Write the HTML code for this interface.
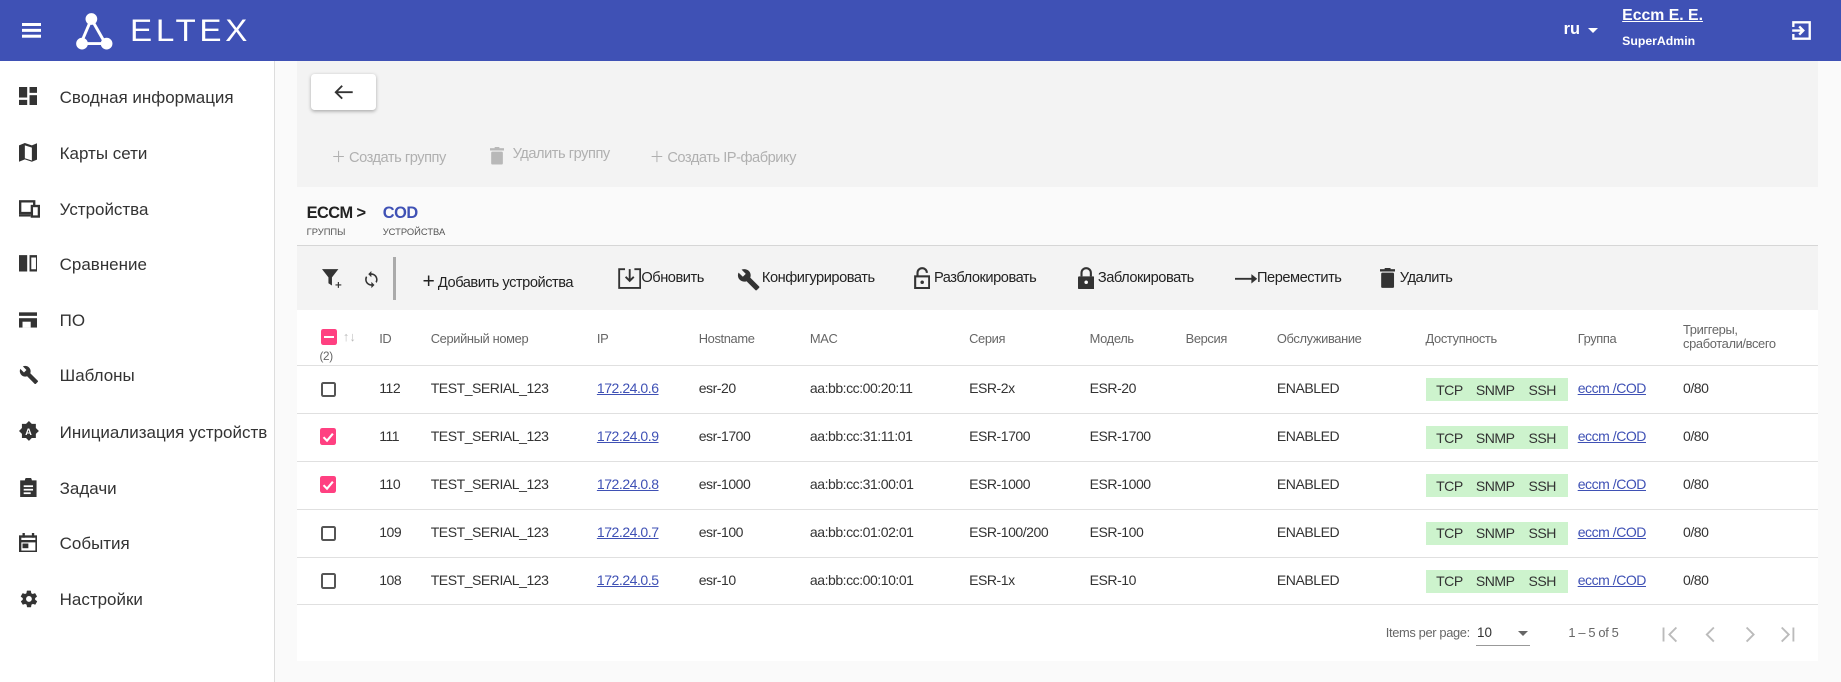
<!DOCTYPE html>
<html><head><meta charset="utf-8">
<style>
html{zoom:1.1704}
*{box-sizing:border-box;margin:0;padding:0}
body{width:1573px;height:583px;overflow:hidden;background:#fafafa;font-family:"Liberation Sans",sans-serif;color:#333;position:relative}
.a{position:absolute;white-space:nowrap}
.hdr{left:0;top:0;width:1573px;height:52px;background:#3f51b5;color:#fff}
.side{left:0;top:52px;width:235px;height:531px;background:#fff;border-right:1px solid #ddd}
.nav{left:16px;font-size:14.5px;color:#333}
.nav svg{position:absolute;left:0;top:-1px}
.nav span{position:absolute;left:35px;top:0}
.t{font-size:12px;color:#333;letter-spacing:-0.4px}
.th{font-size:11px;color:#666;letter-spacing:-0.3px}
.tool{font-size:12.5px;color:#222;top:231px;letter-spacing:-0.4px}
.row{left:254px;width:1299px;height:1px;background:#e0e0e0}
.cb{width:13px;height:13px;border:2px solid #555;border-radius:2px}
.cbon{width:14px;height:14px;background:#ff4081;border-radius:2px}
.acc{background:#cdf3cd;width:122px;height:20px;font-size:12px;color:#333;letter-spacing:-0.4px}
.acc span{position:absolute;top:3px}
.lnk{color:#3f51b5;text-decoration:underline;font-size:12px;letter-spacing:-0.4px}
</style></head><body>
<div class="a hdr">
  <div class="a" style="left:19px;top:20px;width:16px;height:2px;background:#fff;box-shadow:0 5px 0 #fff,0 10px 0 #fff"></div>
  <svg class="a" style="left:64px;top:10px" width="34" height="34" viewBox="0 0 34 34"><g stroke="#fff" stroke-width="2.5"><line x1="14" y1="6" x2="5" y2="27"/><line x1="14" y1="6" x2="26" y2="27"/><line x1="5" y1="27" x2="26" y2="27"/></g><circle cx="14" cy="6" r="5" fill="#fff"/><circle cx="6" cy="27" r="5" fill="#fff"/><circle cx="27" cy="27" r="5" fill="#fff"/></svg>
  <div class="a" style="left:111px;top:10px;font-size:27px;letter-spacing:3px;color:#fff;transform:scaleX(1.05);transform-origin:left">ELTEX</div>
  <div class="a" style="left:1336px;top:17px;font-size:14px;font-weight:bold">ru</div>
  <div class="a" style="left:1357px;top:24px;border-left:5px solid transparent;border-right:5px solid transparent;border-top:5px solid #fff"></div>
  <div class="a" style="left:1386px;top:6px;font-size:13.5px;text-decoration:underline;font-weight:bold">Eccm E. E.</div>
  <div class="a" style="left:1386px;top:29px;font-size:10.5px;font-weight:bold">SuperAdmin</div>
  <svg class="a" style="left:1530px;top:17px" width="18" height="18" viewBox="0 0 18 18" fill="none" stroke="#fff" stroke-width="2"><path d="M2 6V2h14v14H2v-4"/><path d="M1 9h9M7 5.5L10.5 9 7 12.5"/></svg>
</div>
<div class="a side"></div>
<div class="a nav" style="top:75px"><svg width="16" height="16" viewBox="0 0 16 16" fill="#333"><rect x="0" y="0" width="7" height="9"/><rect x="9" y="0" width="7" height="5"/><rect x="9" y="7" width="7" height="9"/><rect x="0" y="11" width="7" height="5"/></svg><span>Сводная информация</span></div>
<div class="a nav" style="top:123px"><svg width="16" height="16" viewBox="0 0 16 16" fill="#333"><path d="M0 2l5-2 6 2 5-2v14l-5 2-6-2-5 2z M5 2v11l6 2V4z" fill-rule="evenodd"/></svg><span>Карты сети</span></div>
<div class="a nav" style="top:171px"><svg width="18" height="16" viewBox="0 0 18 16" fill="none" stroke="#333" stroke-width="2"><rect x="1" y="2" width="12" height="10"/><rect x="11" y="6" width="6" height="9" fill="#fff"/><line x1="0" y1="14" x2="10" y2="14"/></svg><span>Устройства</span></div>
<div class="a nav" style="top:218px"><svg width="16" height="16" viewBox="0 0 16 16" fill="#333"><path d="M0 1h7v14H0z M9 1h7v14H9z M10.5 3v10h4V3z" fill-rule="evenodd"/></svg><span>Сравнение</span></div>
<div class="a nav" style="top:266px"><svg width="16" height="16" viewBox="0 0 16 16" fill="#333"><rect x="0" y="2" width="16" height="3"/><rect x="0" y="7" width="16" height="8"/><rect x="3" y="10" width="7" height="5" fill="#fff"/></svg><span>ПО</span></div>
<div class="a nav" style="top:313px"><svg width="17" height="17" viewBox="0 0 24 24" fill="#333"><path d="M22.7 19l-9.1-9.1c.9-2.3.4-5-1.5-6.9-2-2-5-2.4-7.4-1.3L9 6 6 9 1.6 4.7C.4 7.1.9 10.1 2.9 12.1c1.9 1.9 4.6 2.4 6.9 1.5l9.1 9.1c.4.4 1 .4 1.4 0l2.3-2.3c.5-.4.5-1.1.1-1.4z"/></svg><span>Шаблоны</span></div>
<div class="a nav" style="top:361px"><svg width="17" height="17" viewBox="0 0 17 17"><path d="M8.5 0l2.4 2.5h3.5v3.5L17 8.5l-2.6 2.5v3.5h-3.5L8.5 17 6 14.5H2.5V11L0 8.5 2.5 6V2.5H6z" fill="#333"/><text x="5.2" y="12" font-size="8" font-weight="bold" fill="#fff" font-family="Liberation Sans">A</text></svg><span>Инициализация устройств</span></div>
<div class="a nav" style="top:409px"><svg width="16" height="17" viewBox="0 0 16 17" fill="#333"><path d="M1 2h4a3 3 0 016 0h4v15H1z"/><g stroke="#fff" stroke-width="1.5"><line x1="4" y1="7" x2="12" y2="7"/><line x1="4" y1="10" x2="12" y2="10"/><line x1="4" y1="13" x2="10" y2="13"/></g></svg><span>Задачи</span></div>
<div class="a nav" style="top:456px"><svg width="16" height="17" viewBox="0 0 16 17" fill="none" stroke="#333" stroke-width="2"><rect x="1" y="3" width="14" height="13"/><line x1="1" y1="7" x2="15" y2="7"/><line x1="4" y1="0" x2="4" y2="4"/><line x1="12" y1="0" x2="12" y2="4"/><rect x="4" y="10" width="3" height="2" fill="#333"/></svg><span>События</span></div>
<div class="a nav" style="top:504px"><svg width="17" height="17" viewBox="0 0 24 24" fill="#333"><path d="M19.4 13c0-.3.1-.6.1-1s0-.7-.1-1l2.1-1.6c.2-.2.2-.4.1-.6l-2-3.5c-.1-.2-.4-.3-.6-.2l-2.5 1c-.5-.4-1.1-.7-1.7-1l-.4-2.6c0-.3-.2-.5-.5-.5h-4c-.3 0-.5.2-.5.4l-.4 2.7c-.6.2-1.100.6-1.700 1l-2.500-1c-.2-.1-.5 0-.6.2l-2 3.5c-.1.2-.1.5.1.6L4.6 11c0 .3-.1.6-.1 1s0 .7.1 1l-2.1 1.6c-.2.2-.2.4-.1.6l2 3.5c.1.2.4.3.6.2l2.5-1c.5.4 1.1.7 1.7 1l.4 2.7c0 .2.2.4.5.4h4c.3 0 .5-.2.5-.4l.4-2.7c.6-.3 1.2-.6 1.7-1l2.5 1c.2.1.5 0 .6-.2l2-3.5c.1-.2.1-.5-.1-.6zM12 15.5a3.5 3.5 0 110-7 3.5 3.5 0 010 7z"/></svg><span>Настройки</span></div>

<div class="a" style="left:254px;top:52px;width:1299px;height:108px;background:#f3f3f3"></div>
<div class="a" style="left:266px;top:63px;width:55px;height:31px;background:#fff;border-radius:3px;box-shadow:0 1px 3px rgba(0,0,0,.3)"></div>
<svg class="a" style="left:285px;top:72px" width="17" height="14" viewBox="0 0 17 14" fill="none" stroke="#333" stroke-width="1.6"><path d="M16 7H2M7 1.5L1.5 7 7 12.5"/></svg>
<div class="a" style="left:283px;top:125px;font-size:12.5px;color:#b0b0b0;letter-spacing:-0.4px">＋ Создать группу</div>
<svg class="a" style="left:419px;top:126px" width="12" height="15" viewBox="0 0 12 15" fill="#b8b8b8"><rect x="0" y="1" width="12" height="2"/><rect x="4" y="0" width="4" height="2"/><rect x="1" y="4" width="10" height="11" rx="1"/></svg>
<div class="a" style="left:438px;top:125px;font-size:12.5px;color:#b0b0b0;letter-spacing:-0.4px">Удалить группу</div>
<div class="a" style="left:555px;top:125px;font-size:12.5px;color:#b0b0b0;letter-spacing:-0.4px">＋ Создать IP-фабрику</div>

<div class="a" style="left:262px;top:174px;font-size:14px;color:#222;font-weight:bold;letter-spacing:-0.5px">ECCM &gt;</div>
<div class="a" style="left:327px;top:174px;font-size:14px;color:#3f51b5;font-weight:bold;letter-spacing:-0.4px">COD</div>
<div class="a" style="left:262px;top:194px;font-size:8px;color:#555">ГРУППЫ</div>
<div class="a" style="left:327px;top:194px;font-size:8px;color:#555">УСТРОЙСТВА</div>
<div class="a" style="left:254px;top:209px;width:1299px;height:1px;background:#d6d6d6"></div>

<div class="a" style="left:254px;top:210px;width:1299px;height:55px;background:#f3f3f3"></div>
<svg class="a" style="left:275px;top:229px" width="20" height="18" viewBox="0 0 20 18"><path d="M0 1h14L8.5 8v7L5.5 13V8z" fill="#333"/><path d="M14 12v5M11.5 14.5h5" stroke="#333" stroke-width="1"/></svg>
<svg class="a" style="left:309px;top:230px" width="16" height="18" viewBox="0 0 24 24" fill="#333"><path d="M12 4V1L8 5l4 4V6c3.3 0 6 2.7 6 6 0 1-.3 2-.7 2.8l1.5 1.5c.8-1.2 1.2-2.7 1.2-4.3 0-4.4-3.6-8-8-8zm0 14c-3.3 0-6-2.7-6-6 0-1 .3-2 .7-2.8L5.2 7.7C4.4 8.9 4 10.4 4 12c0 4.4 3.6 8 8 8v3l4-4-4-4v3z"/></svg>
<div class="a" style="left:336px;top:220px;width:2px;height:36px;background:#aaa"></div>
<div class="a tool" style="left:361px;top:230px"><b style="font-weight:400;font-size:18px;position:relative;top:1px">+</b> Добавить устройства</div>
<svg class="a" style="left:528px;top:229px" width="20" height="18" viewBox="0 0 20 18" fill="none" stroke="#333" stroke-width="1.6"><path d="M6 1H1v16h18V1h-5"/><path d="M10 1v10M6.5 7.5L10 11l3.5-3.5"/></svg>
<div class="a tool" style="left:548px">Обновить</div>
<svg class="a" style="left:630px;top:229px" width="20" height="20" viewBox="0 0 24 24" fill="#333"><path d="M22.7 19l-9.1-9.1c.9-2.3.4-5-1.5-6.9-2-2-5-2.4-7.4-1.3L9 6 6 9 1.6 4.7C.4 7.1.9 10.1 2.9 12.1c1.9 1.9 4.6 2.4 6.9 1.5l9.1 9.1c.4.4 1 .4 1.4 0l2.3-2.3c.5-.4.5-1.1.1-1.4z"/></svg>
<div class="a tool" style="left:651px">Конфигурировать</div>
<svg class="a" style="left:781px;top:228px" width="14" height="19" viewBox="0 0 14 19"><path d="M3 8V5a4 4 0 018 0" fill="none" stroke="#333" stroke-width="1.8"/><rect x="1" y="8" width="12" height="10" fill="none" stroke="#333" stroke-width="1.8"/><circle cx="7" cy="13" r="1.5" fill="#333"/></svg>
<div class="a tool" style="left:798px">Разблокировать</div>
<svg class="a" style="left:921px;top:228px" width="14" height="19" viewBox="0 0 14 19"><path d="M3 8V5a4 4 0 018 0v3" fill="none" stroke="#333" stroke-width="1.8"/><rect x="0" y="8" width="14" height="11" rx="1" fill="#333"/><circle cx="7" cy="13" r="1.5" fill="#fff"/></svg>
<div class="a tool" style="left:938px">Заблокировать</div>
<svg class="a" style="left:1055px;top:233px" width="19" height="10" viewBox="0 0 19 10"><path d="M0 5h16" stroke="#333" stroke-width="1.6"/><path d="M14 1l5 4-5 4z" fill="#333"/></svg>
<div class="a tool" style="left:1074px">Переместить</div>
<svg class="a" style="left:1179px;top:229px" width="13" height="17" viewBox="0 0 13 17" fill="#333"><rect x="0" y="1" width="13" height="2"/><rect x="4" y="0" width="5" height="2"/><rect x="1" y="4" width="11" height="13" rx="1"/></svg>
<div class="a tool" style="left:1196px">Удалить</div>

<div class="a" style="left:254px;top:265px;width:1299px;height:300px;background:#fff"></div>
<div class="a cbon" style="left:274px;top:281px"><div class="a" style="left:3px;top:6px;width:8px;height:2px;background:#fff"></div></div>
<div class="a" style="left:293px;top:281px;font-size:11px;color:#bbb">↑↓</div>
<div class="a th" style="left:273px;top:299px;font-size:10px">(2)</div>
<div class="a th" style="left:324px;top:283px">ID</div>
<div class="a th" style="left:368px;top:283px">Серийный номер</div>
<div class="a th" style="left:510px;top:283px">IP</div>
<div class="a th" style="left:597px;top:283px">Hostname</div>
<div class="a th" style="left:692px;top:283px">MAC</div>
<div class="a th" style="left:828px;top:283px">Серия</div>
<div class="a th" style="left:931px;top:283px">Модель</div>
<div class="a th" style="left:1013px;top:283px">Версия</div>
<div class="a th" style="left:1091px;top:283px">Обслуживание</div>
<div class="a th" style="left:1218px;top:283px">Доступность</div>
<div class="a th" style="left:1348px;top:283px">Группа</div>
<div class="a th" style="left:1438px;top:276px;line-height:12px">Триггеры,<br>сработали/всего</div>
<div class="a row" style="top:312px"></div>
<div class="a row" style="top:353px"></div>
<div class="a row" style="top:394px"></div>
<div class="a row" style="top:435px"></div>
<div class="a row" style="top:476px"></div>
<div class="a row" style="top:516px"></div>

<div class="a cb" style="left:274px;top:326px"></div>
<div class="a cbon" style="left:273px;top:366px"><svg width="14" height="14" viewBox="0 0 14 14"><path d="M3 7l3 3 5-6" stroke="#fff" stroke-width="1.8" fill="none"/></svg></div>
<div class="a cbon" style="left:273px;top:407px"><svg width="14" height="14" viewBox="0 0 14 14"><path d="M3 7l3 3 5-6" stroke="#fff" stroke-width="1.8" fill="none"/></svg></div>
<div class="a cb" style="left:274px;top:449px"></div>
<div class="a cb" style="left:274px;top:490px"></div>

<div class="a t" style="left:324px;top:325px">112</div><div class="a t" style="left:368px;top:325px">TEST_SERIAL_123</div><div class="a lnk" style="left:510px;top:325px">172.24.0.6</div><div class="a t" style="left:597px;top:325px">esr-20</div><div class="a t" style="left:692px;top:325px">aa:bb:cc:00:20:11</div><div class="a t" style="left:828px;top:325px">ESR-2x</div><div class="a t" style="left:931px;top:325px">ESR-20</div><div class="a t" style="left:1091px;top:325px">ENABLED</div>
<div class="a t" style="left:324px;top:366px">111</div><div class="a t" style="left:368px;top:366px">TEST_SERIAL_123</div><div class="a lnk" style="left:510px;top:366px">172.24.0.9</div><div class="a t" style="left:597px;top:366px">esr-1700</div><div class="a t" style="left:692px;top:366px">aa:bb:cc:31:11:01</div><div class="a t" style="left:828px;top:366px">ESR-1700</div><div class="a t" style="left:931px;top:366px">ESR-1700</div><div class="a t" style="left:1091px;top:366px">ENABLED</div>
<div class="a t" style="left:324px;top:407px">110</div><div class="a t" style="left:368px;top:407px">TEST_SERIAL_123</div><div class="a lnk" style="left:510px;top:407px">172.24.0.8</div><div class="a t" style="left:597px;top:407px">esr-1000</div><div class="a t" style="left:692px;top:407px">aa:bb:cc:31:00:01</div><div class="a t" style="left:828px;top:407px">ESR-1000</div><div class="a t" style="left:931px;top:407px">ESR-1000</div><div class="a t" style="left:1091px;top:407px">ENABLED</div>
<div class="a t" style="left:324px;top:448px">109</div><div class="a t" style="left:368px;top:448px">TEST_SERIAL_123</div><div class="a lnk" style="left:510px;top:448px">172.24.0.7</div><div class="a t" style="left:597px;top:448px">esr-100</div><div class="a t" style="left:692px;top:448px">aa:bb:cc:01:02:01</div><div class="a t" style="left:828px;top:448px">ESR-100/200</div><div class="a t" style="left:931px;top:448px">ESR-100</div><div class="a t" style="left:1091px;top:448px">ENABLED</div>
<div class="a t" style="left:324px;top:489px">108</div><div class="a t" style="left:368px;top:489px">TEST_SERIAL_123</div><div class="a lnk" style="left:510px;top:489px">172.24.0.5</div><div class="a t" style="left:597px;top:489px">esr-10</div><div class="a t" style="left:692px;top:489px">aa:bb:cc:00:10:01</div><div class="a t" style="left:828px;top:489px">ESR-1x</div><div class="a t" style="left:931px;top:489px">ESR-10</div><div class="a t" style="left:1091px;top:489px">ENABLED</div>

<div class="a acc" style="left:1218px;top:323px"><span style="left:9px">TCP</span><span style="left:43px">SNMP</span><span style="left:88px">SSH</span></div>
<div class="a acc" style="left:1218px;top:364px"><span style="left:9px">TCP</span><span style="left:43px">SNMP</span><span style="left:88px">SSH</span></div>
<div class="a acc" style="left:1218px;top:405px"><span style="left:9px">TCP</span><span style="left:43px">SNMP</span><span style="left:88px">SSH</span></div>
<div class="a acc" style="left:1218px;top:446px"><span style="left:9px">TCP</span><span style="left:43px">SNMP</span><span style="left:88px">SSH</span></div>
<div class="a acc" style="left:1218px;top:487px"><span style="left:9px">TCP</span><span style="left:43px">SNMP</span><span style="left:88px">SSH</span></div>
<div class="a lnk" style="left:1348px;top:325px">eccm /COD</div><div class="a t" style="left:1438px;top:325px">0/80</div>
<div class="a lnk" style="left:1348px;top:366px">eccm /COD</div><div class="a t" style="left:1438px;top:366px">0/80</div>
<div class="a lnk" style="left:1348px;top:407px">eccm /COD</div><div class="a t" style="left:1438px;top:407px">0/80</div>
<div class="a lnk" style="left:1348px;top:448px">eccm /COD</div><div class="a t" style="left:1438px;top:448px">0/80</div>
<div class="a lnk" style="left:1348px;top:489px">eccm /COD</div><div class="a t" style="left:1438px;top:489px">0/80</div>

<div class="a" style="left:1184px;top:534px;font-size:11px;color:#666;letter-spacing:-0.3px">Items per page:</div>
<div class="a" style="left:1262px;top:534px;font-size:11.5px;color:#333">10</div>
<div class="a" style="left:1297px;top:539px;border-left:5px solid transparent;border-right:5px solid transparent;border-top:5px solid #666"></div>
<div class="a" style="left:1261px;top:551px;width:46px;height:1px;background:#999"></div>
<div class="a" style="left:1340px;top:534px;font-size:11px;color:#666;letter-spacing:-0.3px">1 – 5 of 5</div>
<svg class="a" style="left:1418px;top:533px" width="120" height="18" viewBox="0 0 120 18" fill="none" stroke="#bbb" stroke-width="1.6"><path d="M3 3v12M14 3L8 9l6 6"/><path d="M46 3l-6 6 6 6"/><path d="M74 3l6 6-6 6"/><path d="M104 3l6 6-6 6M114 3v12"/></svg>
</body></html>
